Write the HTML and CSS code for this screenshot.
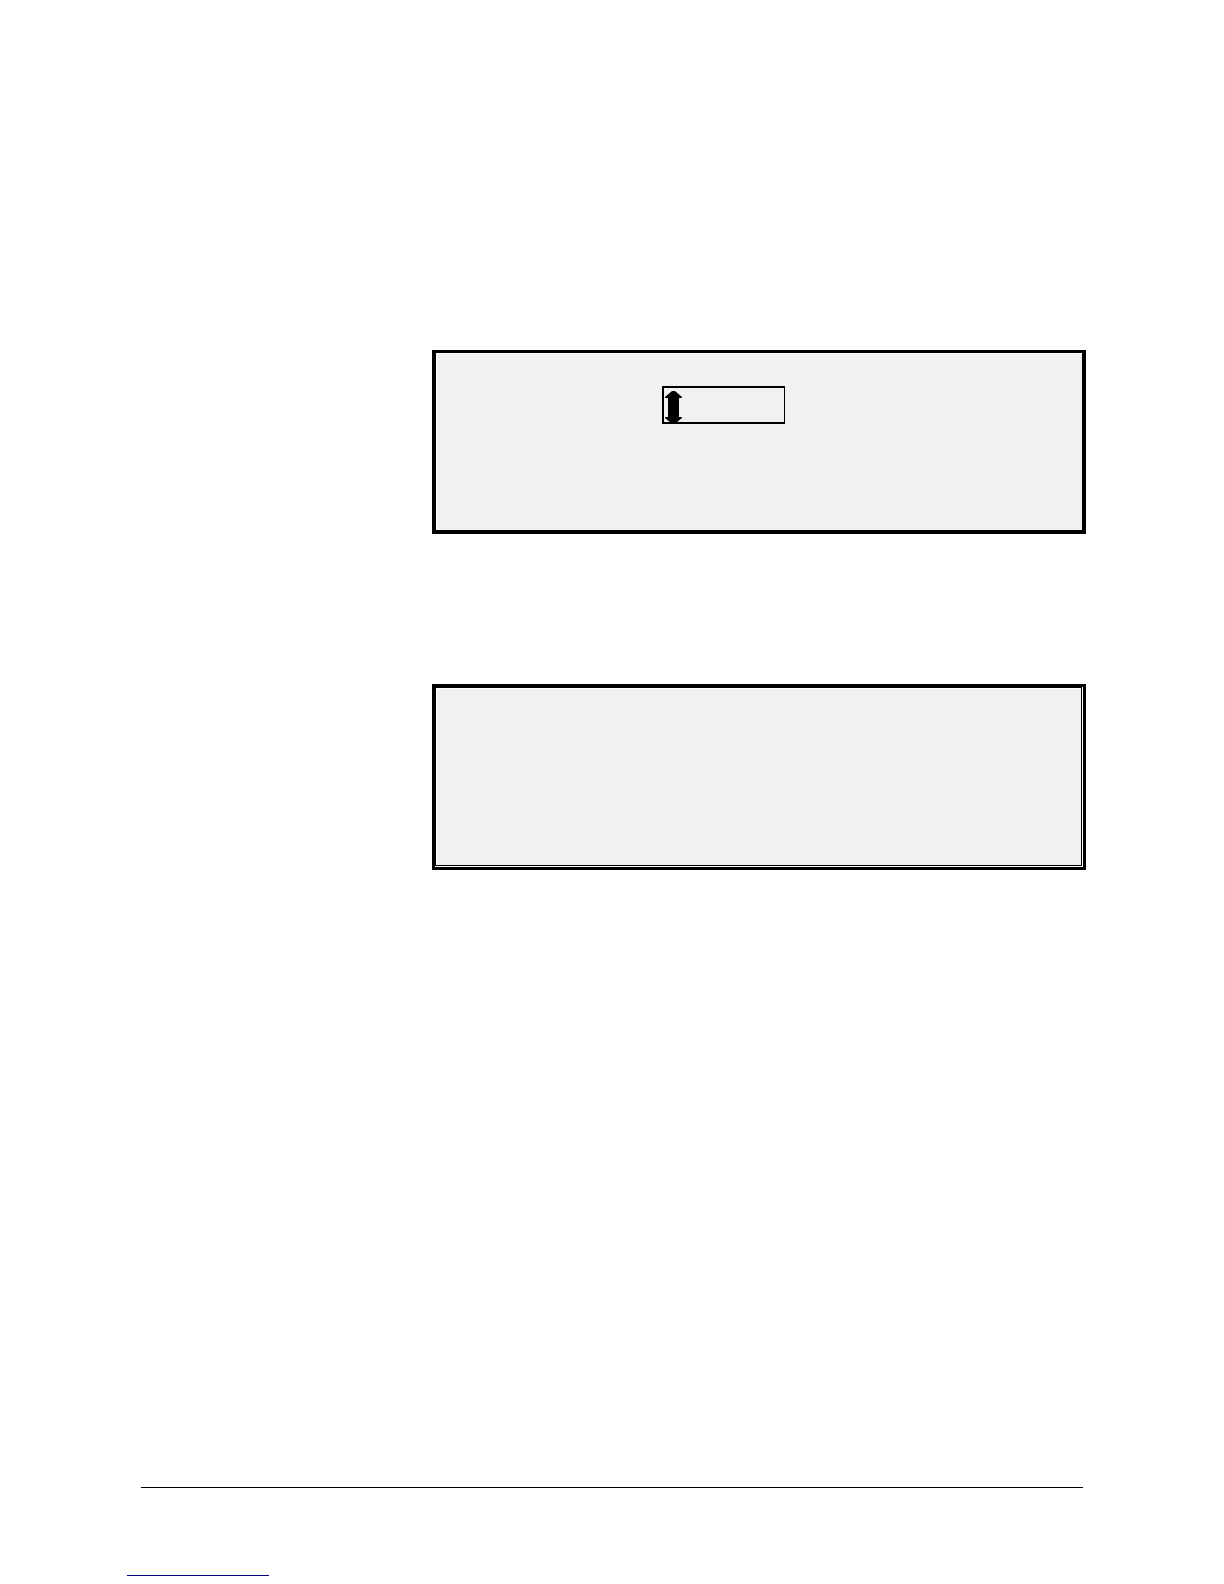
FILE: index.html
```html
<!DOCTYPE html>
<html lang="en">
  <head>
    <meta charset="utf-8">
    <title>Printer Screens</title>
    <link rel="stylesheet" href="styles.css">
  </head>
  <body>
    <main class="content">
      <section class="screen">
        <div class="field">
          <svg class="arrow" viewBox="0 0 17 33" aria-hidden="true">
            <path d="M7 0H10L17 6V7H14V26H17V27L11 32H6L0 27V26H3V7H0V6Z"/>
          </svg>
          <input type="text" class="field-input" aria-label="Value">
        </div>
      </section>
      <section class="screen screen-double">
        <div class="screen-inner"></div>
      </section>
    </main>
    <footer class="footer">
      <hr class="rule">
      <a class="footer-link" href="#" aria-label="Top of page"></a>
    </footer>
  </body>
</html>
```

FILE: styles.css
```css
* {
  box-sizing: border-box;
}
body {
  display: flex;
  flex-direction: column;
  justify-content: space-between;
  min-height: 100vh;
  margin: 0;
  background-color: #fff;
  font-family: "Liberation Sans", sans-serif;
}
.content {
  display: flex;
  flex-direction: column;
  gap: 150px;
  padding: 350px 138px 0 432px;
}
.screen {
  display: flex;
  align-items: flex-start;
  min-height: 184px;
  padding: 33px 16px 16px 226px;
  border: 4px solid #000;
  border-top-width: 3px;
  background-color: #f1f1f1;
  box-shadow: inset 1px 1px #fff;
}
.field {
  display: flex;
  width: 123px;
  height: 38px;
  padding: 3px 0 0 1px;
  border: 2px solid #000;
  border-right-width: 1px;
}
.arrow {
  flex: none;
  width: 17px;
  height: 33px;
}
.field-input {
  flex: 1;
  min-width: 0;
  padding: 0 4px;
  border: 0;
  background: transparent;
  font-size: 16px;
  outline: none;
}
/* second frame: thick outer line, thin inner line, white gap right and bottom */
.screen-double {
  align-items: stretch;
  min-height: 186px;
  padding: 0 1px 1px 0;
  border-width: 3px;
  background-color: #fff;
  box-shadow: none;
}
.screen-inner {
  flex: 1;
  border: 1px solid #000;
  background-color: #f1f1f1;
  box-shadow: inset 1px 1px #fff;
}
.footer {
  padding: 0 141px 8px 127px;
}
.rule {
  height: 1px;
  margin: 0 0 0 14px;
  border: 0;
  background-color: #000;
}
.footer-link {
  display: block;
  width: 142px;
  height: 88px;
  border-bottom: 1px solid #000080;
}
```
